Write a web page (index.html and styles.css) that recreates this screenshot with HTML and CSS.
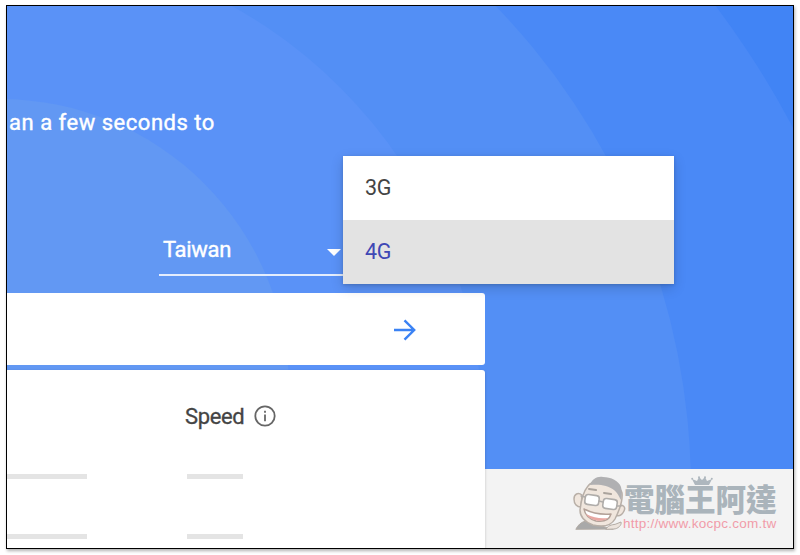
FILE: index.html
```html
<!DOCTYPE html>
<html lang="en">
<head>
    <meta charset="UTF-8">
    <meta name="viewport" content="width=device-width, initial-scale=1.0">
    <title>Mobile Speed</title>
    <link rel="stylesheet" href="styles.css">
</head>
<body>

    <div class="frame">
        <!-- Background circles -->
        <svg class="circles" width="786" height="463" viewBox="7 6 786 463">
            <rect x="7" y="6" width="786" height="463" fill="#4184f5"/>
            <circle cx="-4" cy="548" r="901" fill="#4a89f6"/>
            <circle cx="-4" cy="489" r="695" fill="#538ff5"/>
            <circle cx="-4" cy="432" r="487" fill="#5a92f7"/>
            <circle cx="0" cy="388" r="289" fill="#6298f3"/>
        </svg>

        <div class="content">
            <p class="intro">an a few seconds to</p>

            <div class="selects">
                <div class="select">
                    <span>Taiwan</span>
                    <svg width="14" height="7" viewBox="0 0 14 7"><path d="M0 0h14L7 7z" fill="#fff"/></svg>
                </div>
                <div class="menu">
                    <div class="option">3G</div>
                    <div class="option selected">4G</div>
                </div>
            </div>

            <div class="card search">
                <svg width="22" height="22" viewBox="0 0 22 22" fill="none" stroke="#3b82f4" stroke-width="2.4">
                    <path d="M0 11h20M10.5 1.3L20.2 11l-9.7 9.7"/>
                </svg>
            </div>

            <div class="card results">
                <div class="heading">
                    <span>Speed</span>
                    <svg width="22" height="22" viewBox="0 0 22 22">
                        <circle cx="11" cy="11" r="9.7" fill="none" stroke="#666" stroke-width="1.8"/>
                        <path d="M10.1 5.7h1.8v2h-1.8zM10.1 9.5h1.8v6.8h-1.8z" fill="#666"/>
                    </svg>
                </div>
                <div class="row"><i class="bar wide"></i><i class="bar"></i></div>
                <div class="row"><i class="bar wide"></i><i class="bar"></i></div>
            </div>
        </div>

        <!-- Watermark -->
        <div class="watermark">
            <svg class="face" width="54" height="58" viewBox="0 0 54 58" stroke-linejoin="round" stroke-linecap="round">
                <path d="M4 54c2-4 5-7 10-8l22 7 5 1z" fill="#a9a9a9" stroke="#b3aca5"/>
                <path d="M34 54c3-5 8-4 10-5l5-2c1 3-3 7-7 7z" fill="#ece4dd" stroke="#b3aca5"/>
                <path d="M10 20c-4-3-8-1-8 4 0 5 3 8 7 8zM46 31c5-2 8 1 6 5-2 4-5 6-9 4z" fill="#f0e6dd" stroke="#b8afa7" stroke-width="1.5"/>
                <path d="M16 11C11 17 9 26 8 35c0 8 5 12 13 15 9 2 18 1 22-6 4-8 8-17 7-26-2-9-28-15-34-7z" fill="#f0e6dd" stroke="#b8afa7" stroke-width="1.5"/>
                <path d="M18 10c2-6 7-9 13-8 8 0 16 4 18 10 1 4 1 8 0 13-2-3-3-7-7-10-6-5-15-6-24-5z" fill="#b0b0b2"/>
                <path d="M17 14l7 1M32 18l7 1" fill="none" stroke="#aaa39c" stroke-width="2"/>
                <rect x="13" y="20" width="14" height="10" rx="3" transform="rotate(8 20 25)" fill="#fff" stroke="#b0adaa" stroke-width="1.6"/>
                <rect x="31" y="24" width="14" height="10" rx="3" transform="rotate(8 38 29)" fill="#fff" stroke="#b0adaa" stroke-width="1.6"/>
                <path d="M9 21l4 1M27 26l4 1M45 31h4" fill="none" stroke="#b0adaa" stroke-width="1.5"/>
                <path d="M12 34c8 4 17 6 27 5-2 7-8 8-15 7-7-2-11-6-12-12z" fill="#fff" stroke="#b3a198" stroke-width="1.5"/>
                <path d="M14 39c8 4 15 5 22 4-5 5-18 3-22-4z" fill="#e8a7a2"/>
            </svg>
            <div class="brand">
                <svg class="crown" width="22" height="10" viewBox="0 0 22 10" fill="#aeb7be">
                    <path d="M4 9L1 3l5 2 2-4 3 3 3-3 2 4 5-2-3 6z"/>
                    <circle cx="1.2" cy="2.8" r="1"/><circle cx="8" cy="1.2" r="1"/><circle cx="14" cy="1.2" r="1"/><circle cx="20.8" cy="2.8" r="1"/>
                </svg>
                <div class="name">電腦王阿達</div>
                <div class="url">http://www.kocpc.com.tw</div>
            </div>
        </div>
    </div>

</body>
</html>
```
FILE: styles.css
```css
body {
    margin: 0;
    padding: 5px 6px;
    background: #fff;
    font-family: Roboto, sans-serif;
    overflow: hidden;
}
.frame {
    position: relative;
    box-sizing: border-box;
    width: 788px;
    height: 544px;
    border: 1px solid #000;
    background: #f3f3f3;
    box-shadow: 1px 2px 3px rgba(0, 0, 0, 0.3);
    overflow: hidden;
}
.circles {
    position: absolute;
    left: 0;
    top: 0;
}
.content {
    position: relative;
    width: 478px;
}
.intro {
    margin: 0;
    padding: 102px 0 0 2px;
    color: #fff;
    font-size: 22px;
    line-height: 30px;
    letter-spacing: 0.52px;
    -webkit-text-stroke: 0.4px #fff;
    white-space: nowrap;
}
.selects {
    display: flex;
    align-items: flex-end;
    box-sizing: border-box;
    position: relative;
    height: 155px;
    padding: 0 0 17px 152px;
}
.select {
    display: flex;
    justify-content: space-between;
    align-items: center;
    box-sizing: border-box;
    width: 186px;
    height: 51px;
    padding: 0 4px;
    border-bottom: 2px solid #e4edfd;
    color: #fff;
    font-size: 22px;
    letter-spacing: -0.3px;
    -webkit-text-stroke: 0.4px #fff;
}
.select svg {
    margin-top: 5px;
}
.menu {
    position: absolute;
    left: 336px;
    top: 18px;
    width: 331px;
    z-index: 2;
    background: #fff;
    box-shadow: 0 4px 12px rgba(0, 0, 0, 0.16), 0 1px 3px rgba(0, 0, 0, 0.15);
}
.option {
    height: 64px;
    padding-left: 22px;
    color: #444;
    font-size: 21.5px;
    letter-spacing: -0.4px;
    line-height: 64px;
}
.selected {
    background: #e3e3e3;
    color: #3f48b5;
}
.card {
    box-sizing: border-box;
    background: #fff;
    border-radius: 0 3px 3px 0;
}
.search {
    display: flex;
    align-items: center;
    justify-content: flex-end;
    height: 72px;
    padding: 2px 69px 0 0;
}
.results {
    height: 180px;
    margin-top: 5px;
    box-shadow: 0 1px 3px rgba(0, 0, 0, 0.2);
}
.heading {
    display: flex;
    align-items: center;
    gap: 10px;
    height: 30px;
    padding: 31px 0 0 178px;
    color: #444;
    font-size: 22px;
    letter-spacing: -0.35px;
    -webkit-text-stroke: 0.3px #444;
}
.row {
    display: flex;
    gap: 100px;
    margin-top: 55px;
}
.heading + .row {
    margin-top: 43px;
}
.bar {
    width: 56px;
    height: 5px;
    background: #e4e4e4;
}
.wide {
    width: 80px;
}
.watermark {
    position: absolute;
    left: 565px;
    top: 469px;
    display: flex;
}
.brand {
    position: relative;
    margin-left: -2px;
    padding-top: 7px;
}
.crown {
    position: absolute;
    left: 67px;
    top: 1px;
}
.name {
    color: #aab4bb;
    font-family: "Noto Sans CJK TC", sans-serif;
    font-size: 30.5px;
    font-weight: 900;
    line-height: 32px;
    white-space: nowrap;
}
.url {
    margin-left: -1px;
    padding-top: 1px;
    color: #f19ca9;
    font-family: "Liberation Sans", sans-serif;
    font-size: 13.5px;
    line-height: 17px;
    letter-spacing: 0.25px;
    white-space: nowrap;
}
```
